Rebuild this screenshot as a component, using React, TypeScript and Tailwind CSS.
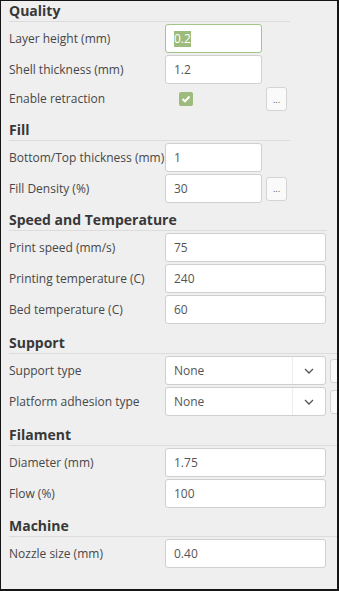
import React from 'react';

const font = { fontFamily: '"Open Sans", "Noto Sans", sans-serif' };

const Header: React.FC<{ title: string; className: string }> = ({ title, className }) => (
  <div className={`h-[21px] border-b border-[#dcdcdc] text-[14px] leading-[20px] font-bold text-[#383838] ${className}`}>
    {title}
  </div>
);

const Label: React.FC<{ text: string }> = ({ text }) => (
  <div className="w-[156px] shrink-0 text-[12px] text-[#474747] whitespace-nowrap">{text}</div>
);

const Input: React.FC<{ value: string; wide?: boolean; focused?: boolean }> = ({ value, wide, focused }) => (
  <div
    className={`h-[29px] shrink-0 rounded-[3px] border bg-white flex items-center pl-[8px] text-[12px] text-[#555] ${
      wide ? 'w-[161px]' : 'w-[97px]'
    } ${focused ? 'border-[#a3c585]' : 'border-[#cfcfcf]'}`}
  >
    {focused ? <span className="bg-[#9cbb7c] text-white leading-[16px]">{value}</span> : value}
  </div>
);

const DotsButton: React.FC = () => (
  <div className="ml-[4px] w-[21px] h-[24px] shrink-0 rounded-[3px] border border-[#d4d4d4] bg-[#fafafa] flex items-center justify-center text-[9px] text-[#555] leading-none">
    ...
  </div>
);

const Select: React.FC<{ value: string }> = ({ value }) => (
  <div className="h-[29px] w-[161px] shrink-0 rounded-[3px] border border-[#cfcfcf] bg-white flex items-center text-[12px] text-[#555]">
    <div className="flex-1 pl-[8px]">{value}</div>
    <div className="w-[33px] h-full border-l border-[#ececec] flex items-center justify-center">
      <svg width="10" height="6" viewBox="0 0 10 6" fill="none">
        <path d="M1 1L5 5L9 1" stroke="#555" strokeWidth="1.3" />
      </svg>
    </div>
  </div>
);

const Row: React.FC<{ className?: string; children: React.ReactNode }> = ({ className = 'mt-[2px]', children }) => (
  <div className={`flex items-center ${className}`}>{children}</div>
);

export default function App() {
  return (
    <div
      style={font}
      className="w-[339px] h-[591px] overflow-hidden bg-[#efefef] border-t border-l border-r-2 border-b-2 border-[#151515]"
    >
      <div className="pl-[8px]">
        <Header title="Quality" className="w-[281px]" />
        <Row className="mt-[2px]">
          <Label text="Layer height (mm)" />
          <Input value="0.2" focused />
        </Row>
        <Row>
          <Label text="Shell thickness (mm)" />
          <Input value="1.2" />
        </Row>
        <Row className="mt-[2px] h-[26px]">
          <Label text="Enable retraction" />
          <div className="w-[97px] shrink-0 pl-[14px] flex items-center">
            <div className="w-[14px] h-[14px] rounded-[2px] bg-[#9cbb7c] flex items-center justify-center">
              <svg width="10" height="8" viewBox="0 0 10 8" fill="none">
                <path d="M1.5 4L4 6.3L8.5 1.5" stroke="white" strokeWidth="2" />
              </svg>
            </div>
          </div>
          <DotsButton />
        </Row>

        <Header title="Fill" className="w-[281px] mt-[8px]" />
        <Row>
          <Label text="Bottom/Top thickness (mm)" />
          <Input value="1" />
        </Row>
        <Row>
          <Label text="Fill Density (%)" />
          <Input value="30" />
          <DotsButton />
        </Row>

        <Header title="Speed and Temperature" className="w-[318px] mt-[7px]" />
        <Row>
          <Label text="Print speed (mm/s)" />
          <Input value="75" wide />
        </Row>
        <Row>
          <Label text="Printing temperature (C)" />
          <Input value="240" wide />
        </Row>
        <Row>
          <Label text="Bed temperature (C)" />
          <Input value="60" wide />
        </Row>

        <Header title="Support" className="w-[340px] mt-[9px]" />
        <Row>
          <Label text="Support type" />
          <Select value="None" />
          <DotsButton />
        </Row>
        <Row className="mt-[2px]">
          <Label text="Platform adhesion type" />
          <Select value="None" />
          <DotsButton />
        </Row>

        <Header title="Filament" className="w-[340px] mt-[9px]" />
        <Row>
          <Label text="Diameter (mm)" />
          <Input value="1.75" wide />
        </Row>
        <Row>
          <Label text="Flow (%)" />
          <Input value="100" wide />
        </Row>

        <Header title="Machine" className="w-[340px] mt-[8px]" />
        <Row>
          <Label text="Nozzle size (mm)" />
          <Input value="0.40" wide />
        </Row>
      </div>
    </div>
  );
}
